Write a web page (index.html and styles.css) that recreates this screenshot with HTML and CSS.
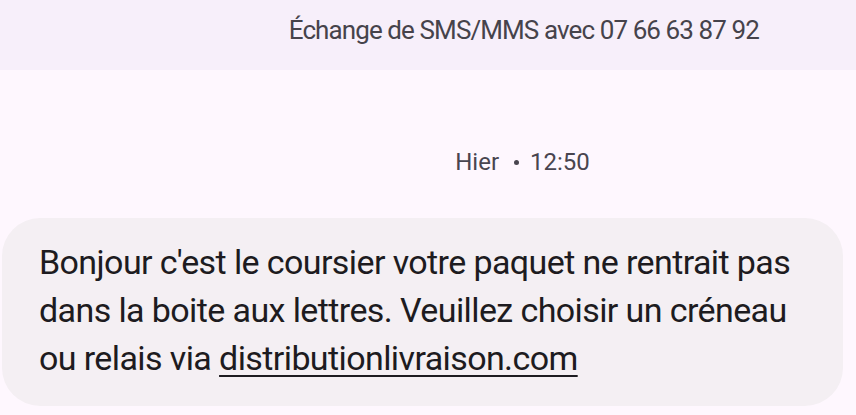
FILE: index.html
```html
<!DOCTYPE html>
<html lang="fr">
<head>
<meta charset="utf-8">
<title>Messages</title>
<link rel="stylesheet" href="styles.css">
</head>
<body>
<header class="topbar">
  <span class="topbar-title">Échange de SMS/MMS avec 07 66 63 87 92</span>
</header>
<main class="thread">
  <div class="timestamp"><span>Hier</span><span class="dot"></span><span>12:50</span></div>
  <div class="bubble">
    <p class="bubble-text">Bonjour c'est le coursier votre paquet ne rentrait pas dans la boite aux lettres. Veuillez choisir un créneau ou relais via <a class="link" href="#">distributionlivraison.com</a></p>
  </div>
</main>
</body>
</html>
```
FILE: styles.css
```css
html, body {
  margin: 0;
  padding: 0;
}
body {
  width: 856px;
  height: 415px;
  overflow: hidden;
  background: #fef7fe;
  font-family: Roboto, "Noto Sans", sans-serif;
  color: #1d1b20;
}
.topbar {
  height: 70px;
  background: #f7effa;
  display: flex;
  justify-content: flex-end;
  align-items: center;
  padding-right: 97px;
  box-sizing: border-box;
}
.topbar-title {
  font-size: 26px;
  color: #46434b;
  letter-spacing: -0.9px;
  margin-top: -10px;
}
.thread {
  display: flex;
  flex-direction: column;
  padding: 78px 13px 0 2px;
}
.timestamp {
  display: flex;
  justify-content: center;
  align-items: center;
  font-size: 24px;
  color: #49454f;
  padding-left: 200px;
  height: 28px;
}
.dot {
  width: 5px;
  height: 5px;
  border-radius: 50%;
  background: #49454f;
  margin: 0 11px 0 15px;
}
.bubble {
  margin-top: 42px;
  background: #f4eff3;
  border-radius: 38px;
  padding: 20px 30px 24px 37px;
}
.bubble-text {
  margin: 0;
  font-size: 34px;
  line-height: 48px;
  letter-spacing: -0.6px;
}
.link {
  color: inherit;
  text-decoration: underline;
  text-decoration-thickness: 2px;
  text-underline-offset: 5px;
}
```
